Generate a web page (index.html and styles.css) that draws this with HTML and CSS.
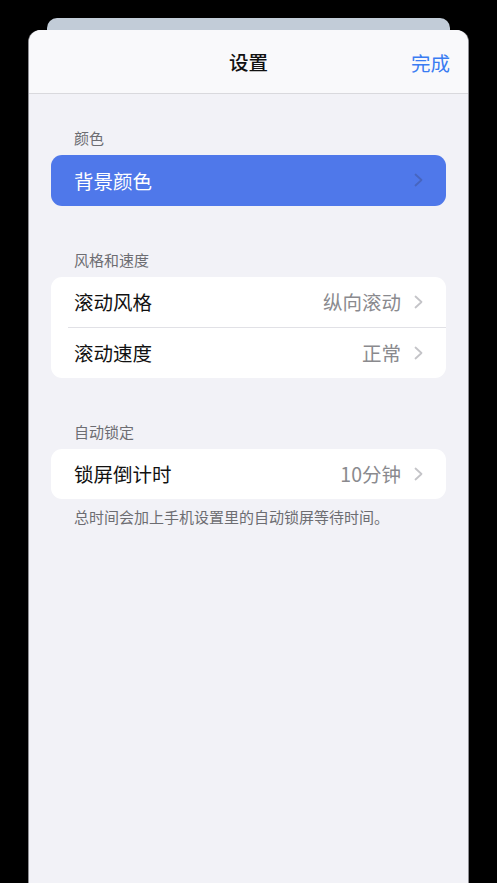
FILE: index.html
```html
<!DOCTYPE html>
<html lang="zh-CN">
<head>
<meta charset="utf-8">
<title>设置</title>
<link rel="stylesheet" href="styles.css">
</head>
<body>
<div class="screen">
  <div class="back-card"></div>
  <div class="sheet">
    <header class="nav">
      <div class="nav-title">设置</div>
      <div class="nav-done">完成</div>
    </header>
    <main class="content">
      <section class="group first">
        <div class="group-label">颜色</div>
        <div class="card card-blue">
          <div class="row">
            <div class="row-inner">
              <span class="row-title">背景颜色</span>
              <svg class="chev" viewBox="0 0 9 14" width="9" height="14"><polyline points="1.5,1.5 7.5,7 1.5,12.5" fill="none" stroke="currentColor" stroke-width="1.8" stroke-linecap="round" stroke-linejoin="round"/></svg>
            </div>
          </div>
        </div>
      </section>
      <section class="group">
        <div class="group-label">风格和速度</div>
        <div class="card">
          <div class="row">
            <div class="row-inner">
              <span class="row-title">滚动风格</span>
              <span class="row-value">纵向滚动</span>
              <svg class="chev" viewBox="0 0 9 14" width="9" height="14"><polyline points="1.5,1.5 7.5,7 1.5,12.5" fill="none" stroke="currentColor" stroke-width="1.8" stroke-linecap="round" stroke-linejoin="round"/></svg>
            </div>
          </div>
          <div class="row">
            <div class="row-inner sep">
              <span class="row-title">滚动速度</span>
              <span class="row-value">正常</span>
              <svg class="chev" viewBox="0 0 9 14" width="9" height="14"><polyline points="1.5,1.5 7.5,7 1.5,12.5" fill="none" stroke="currentColor" stroke-width="1.8" stroke-linecap="round" stroke-linejoin="round"/></svg>
            </div>
          </div>
        </div>
      </section>
      <section class="group">
        <div class="group-label">自动锁定</div>
        <div class="card">
          <div class="row">
            <div class="row-inner">
              <span class="row-title">锁屏倒计时</span>
              <span class="row-value">10分钟</span>
              <svg class="chev" viewBox="0 0 9 14" width="9" height="14"><polyline points="1.5,1.5 7.5,7 1.5,12.5" fill="none" stroke="currentColor" stroke-width="1.8" stroke-linecap="round" stroke-linejoin="round"/></svg>
            </div>
          </div>
        </div>
        <div class="group-footer">总时间会加上手机设置里的自动锁屏等待时间。</div>
      </section>
    </main>
  </div>
</div>
</body>
</html>
```
FILE: styles.css
```css
* { box-sizing: border-box; }
html, body {
  margin: 0;
  padding: 0;
  height: 100%;
  overflow: hidden;
  background: #000;
}
body {
  font-family: "Noto Sans CJK SC", "Noto Sans", sans-serif;
  color: #000;
}
.screen {
  display: flex;
  flex-direction: column;
  padding-top: 18px;
  height: 100%;
}
.back-card {
  height: 12px;
  margin: 0 47px;
  background: #c2ccd8;
  border-radius: 10px 10px 0 0;
  flex: none;
}
.sheet {
  flex: 1;
  margin: 0 29px;
  background: #f2f2f7;
  border-radius: 12px 12px 0 0;
  overflow: hidden;
  display: flex;
  flex-direction: column;
  box-shadow: -1px 0 0 #8e8e93, 1px 0 0 #8e8e93;
}
.nav {
  height: 64px;
  flex: none;
  background: #f9f9fb;
  border-bottom: 1px solid #d9d9dd;
  display: flex;
  align-items: center;
  justify-content: center;
  position: relative;
}
.nav-title {
  font-size: 19.5px;
  font-weight: 500;
  color: #111;
}
.nav-done {
  position: absolute;
  right: 18px;
  top: 50%;
  transform: translateY(-50%);
  font-size: 19.5px;
  color: #3a7cf2;
}
.content {
  padding: 35px 22px 0;
}
.group + .group {
  margin-top: 45px;
}
.group-label {
  font-size: 15px;
  line-height: 18px;
  color: #6d6d72;
  padding-left: 23px;
  margin-bottom: 8px;
}
.group-footer {
  font-size: 15px;
  line-height: 18px;
  color: #6d6d72;
  padding-left: 23px;
  margin-top: 9px;
}
.card {
  background: #fff;
  border-radius: 11px;
  overflow: hidden;
}
.card-blue {
  background: #4f78ea;
}
.row {
  padding-left: 17px;
}
.row-inner {
  height: 50.5px;
  display: flex;
  align-items: center;
  padding-left: 6px;
  padding-right: 23px;
}
.row-inner.sep {
  border-top: 1px solid #e1e1e6;
}
.row-title {
  flex: 1;
  font-size: 19.5px;
  color: #111;
}
.card-blue .row-title {
  color: #fff;
}
.row-value {
  font-size: 19.5px;
  color: #8a8a8e;
  margin-right: 13px;
}
.chev {
  display: block;
  color: #c4c4c8;
}
.card-blue .chev {
  color: #4765bf;
}
```
